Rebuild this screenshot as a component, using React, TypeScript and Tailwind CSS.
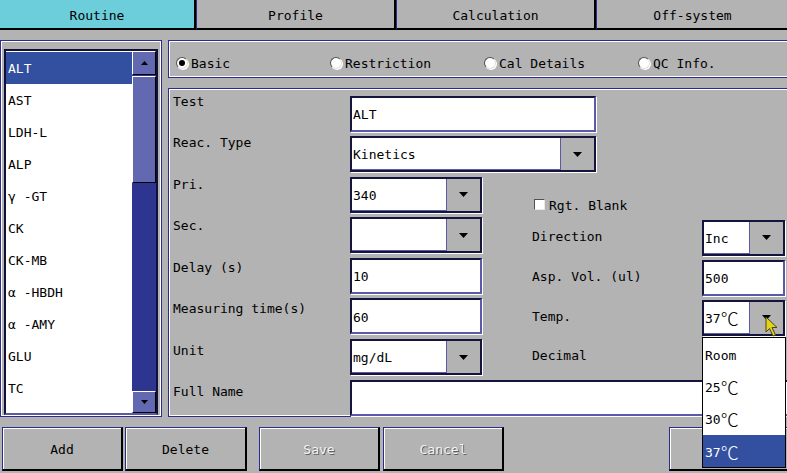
import React from 'react';

const Tri: React.FC<{ up?: boolean; small?: boolean }> = ({ up = false, small = false }) => {
  const w = small ? 7 : 9;
  const h = small ? 4 : 5;
  return (
    <svg width={w} height={h} viewBox={`0 0 ${w} ${h}`}>
      <path d={up ? `M0 ${h} L${w / 2} 0 L${w} ${h}Z` : `M0 0 L${w} 0 L${w / 2} ${h}Z`} fill="#000" />
    </svg>
  );
};

// degree sign drawn wide, like the device font
const Txt: React.FC<{ s: string }> = ({ s }) => {
  if (!s.includes('℃')) return <>{s}</>;
  const [a, b] = s.split('℃');
  return (
    <>
      {a}
      <span className="font-['Noto_Sans_CJK_SC',sans-serif] font-light text-[18px] leading-[16px] -mt-[2px]">℃</span>
      {b}
    </>
  );
};

const TextBox: React.FC<{ value?: string; className?: string }> = ({ value = '', className = '' }) => (
  <div
    className={`h-[36px] bg-white border-2 border-t-[#14143c] border-l-[#14143c] border-r-[#5a5aa8] border-b-[#5a5aa8] shadow-[1px_1px_0_#fff] flex items-center pl-[1px] pt-[3px] ${className}`}
  >
    {value}
  </div>
);

const Combo: React.FC<{ value?: string; className?: string; children?: React.ReactNode }> = ({
  value = '',
  className = '',
  children,
}) => (
  <div className={`relative h-[36px] flex border-2 border-[#14143c] bg-white shadow-[1px_1px_0_#fff] ${className}`}>
    <div className="flex-1 flex items-center pl-[1px] pt-[3px] border-b border-[#5a5aa8]">
      <Txt s={value} />
    </div>
    <div className="w-[34px] bg-[#b3b3b3] border-l border-[#5a5aa8] flex items-center justify-center">
      <Tri />
    </div>
    {children}
  </div>
);

const Radio: React.FC<{ label: string; checked?: boolean }> = ({ label, checked = false }) => (
  <div className="w-[154px] flex items-center gap-[3px] shrink-0">
    <div className="w-[12px] h-[12px] rounded-full bg-white border border-t-[#505050] border-l-[#505050] border-r-[#e0e0e0] border-b-[#e0e0e0] shadow-[1px_1px_0_#fff] flex items-center justify-center">
      {checked && <div className="w-[6px] h-[6px] rounded-full bg-black" />}
    </div>
    <span className="pt-[2px]">{label}</span>
  </div>
);

const Button: React.FC<{ label: string; disabled?: boolean; className?: string }> = ({
  label,
  disabled = false,
  className = '',
}) => (
  <div
    className={`h-[44px] w-[121px] shrink-0 flex items-center justify-center pt-[2px] border-l border-t border-l-[#2c2c8e] border-t-[#2c2c8e] border-r-2 border-b-2 border-r-black border-b-black shadow-[inset_1px_1px_0_#fff] ${
      disabled ? 'text-[#f4f4f4] [text-shadow:1px_1px_0_#5e5e5e]' : ''
    } ${className}`}
  >
    {label}
  </div>
);

const tests = ['ALT', 'AST', 'LDH-L', 'ALP', 'γ -GT', 'CK', 'CK-MB', 'α -HBDH', 'α -AMY', 'GLU', 'TC'];
const labels = ['Test', 'Reac. Type', 'Pri.', 'Sec.', 'Delay (s)', 'Measuring time(s)', 'Unit', 'Full Name'];
const temps = ['Room', '25℃', '30℃', '37℃'];

const App: React.FC = () => {
  return (
    <div className="w-[787px] h-[473px] overflow-hidden bg-[#b3b3b3] font-['DejaVu_Sans_Mono','Noto_Sans_CJK_SC',monospace] text-[13px] leading-[16px] text-black">
      {/* tabs */}
      <div className="flex h-[30px]">
        <div className="w-[196px] shrink-0 bg-[#6ccddb] flex items-center justify-center pt-[3px] border-r-2 border-b-2 border-black">Routine</div>
        <div className="w-[200px] shrink-0 flex items-center justify-center pt-[3px] border-l border-l-[#2c2c8e] border-r-2 border-b-2 border-r-black border-b-black">Profile</div>
        <div className="w-[200px] shrink-0 flex items-center justify-center pt-[3px] border-l border-l-[#2c2c8e] border-r-2 border-b-2 border-r-black border-b-black">Calculation</div>
        <div className="w-[200px] shrink-0 flex items-center justify-center pt-[3px] border-l border-l-[#2c2c8e] border-r-2 border-b-2 border-r-black border-b-black">
          <span className="-ml-[6px]">Off-system</span>
        </div>
      </div>

      {/* main */}
      <div className="flex mt-[10px] h-[377px]">
        {/* test list */}
        <div className="w-[162px] h-[377px] shrink-0 border border-[#2c2c8e] shadow-[inset_0_0_0_1px_#fff] pl-[3px] pt-[8px] pb-[1px]">
          <div className="w-[154px] h-[366px] flex bg-white border-2 border-t-[#101038] border-l-[#101038] border-r-[#101038] border-b-[#5a5aa8]">
            <div className="flex-1 pt-[1px]">
              {tests.map((t, i) => (
                <div
                  key={t}
                  className={`h-[32px] flex items-center pl-[2px] pt-[2px] ${i === 0 ? 'bg-[#3350a0] text-white' : ''}`}
                >
                  {t}
                </div>
              ))}
            </div>
            <div className="w-[24px] flex flex-col bg-[#2e3590]">
              <div className="h-[24px] bg-[#6369b1] border-t border-l border-white border-r border-b border-r-black border-b-black flex items-center justify-center">
                <Tri up small />
              </div>
              <div className="h-[107px] mt-[1px] bg-[#6369b1] border-t border-l border-white border-r border-b border-r-black border-b-black" />
              <div className="flex-1" />
              <div className="h-[22px] bg-[#6369b1] border-t border-l border-white border-r border-b border-r-black border-b-black flex items-center justify-center">
                <Tri small />
              </div>
            </div>
          </div>
        </div>

        {/* right side */}
        <div className="w-[625px] shrink-0 ml-[6px] flex flex-col">
          <div className="h-[38px] border border-[#2c2c8e] shadow-[inset_0_0_0_1px_#fff] flex items-center pt-[8px] pl-[7px]">
            <Radio label="Basic" checked />
            <Radio label="Restriction" />
            <Radio label="Cal Details" />
            <Radio label="QC Info." />
          </div>

          <div className="mt-[10px] h-[329px] border border-[#2c2c8e] shadow-[inset_0_0_0_1px_#fff] flex">
            <div className="w-[181px] shrink-0 pl-[4px] pt-[5px]">
              {labels.map((l) => (
                <div key={l} className="h-[41.43px]">
                  {l}
                </div>
              ))}
            </div>
            <div className="flex-1 pt-[7px] flex flex-col gap-[4.6px]">
              <TextBox value="ALT" className="w-[246px]" />
              <Combo value="Kinetics" className="w-[246px]" />
              <div className="flex">
                <div className="w-[132px] flex flex-col gap-[4.6px]">
                  <Combo value="340" />
                  <Combo />
                  <TextBox value="10" />
                  <TextBox value="60" />
                  <Combo value="mg/dL" />
                </div>
                <div className="w-[253px] ml-[50px] flex flex-col">
                  <div className="h-[16px] mt-[20px] flex items-center pl-[2px] gap-[4px]">
                    <div className="w-[11px] h-[11px] bg-white border border-t-[#505050] border-l-[#505050] border-r-[#e8e8e8] border-b-[#e8e8e8]" />
                    <span className="pt-[2px]">Rgt. Blank</span>
                  </div>
                  <div className="mt-[7px] h-[36px] flex">
                    <div className="flex-1 pt-[9px]">Direction</div>
                    <Combo value="Inc" className="w-[83px]" />
                  </div>
                  <div className="mt-[4px] h-[36px] flex">
                    <div className="flex-1 pt-[9px]">Asp. Vol. (ul)</div>
                    <TextBox value="500" className="w-[83px]" />
                  </div>
                  <div className="mt-[4px] h-[36px] flex">
                    <div className="flex-1 pt-[9px]">Temp.</div>
                    <Combo value="37℃" className="w-[83px]">
                      <div className="absolute left-[-2px] top-[35px] w-[84px] h-[131px] z-10 bg-white border border-black">
                        {temps.map((t, i) => (
                          <div
                            key={t}
                            className={`h-[32.3px] flex items-center pl-[2px] pt-[4px] ${i === 3 ? 'bg-[#3350a0] text-white' : ''}`}
                          >
                            <Txt s={t} />
                          </div>
                        ))}
                      </div>
                      <svg className="absolute left-[61px] top-[14px] z-20" width="14" height="22" viewBox="0 0 14 22">
                        <path d="M1 1 L1 16 L4.5 12.5 L8 20 L10.5 19 L7 11.5 L12 11.5 Z" fill="#e2d21e" stroke="#4a4410" strokeWidth="1" />
                      </svg>
                    </Combo>
                  </div>
                  <div className="mt-[4px] h-[36px] flex">
                    <div className="flex-1 pt-[8px]">Decimal</div>
                  </div>
                </div>
              </div>
              <TextBox className="w-[450px] h-[34px]" />
            </div>
          </div>
        </div>
      </div>

      {/* bottom buttons */}
      <div className="flex mt-[10px]">
        <Button label="Add" className="ml-[2px]" />
        <Button label="Delete" className="ml-[2px] w-[122px]" />
        <Button label="Save" disabled className="ml-[12px]" />
        <Button label="Cancel" disabled className="ml-[3px]" />
        <Button label="" className="ml-[165px]" />
      </div>
    </div>
  );
};

export default App;
